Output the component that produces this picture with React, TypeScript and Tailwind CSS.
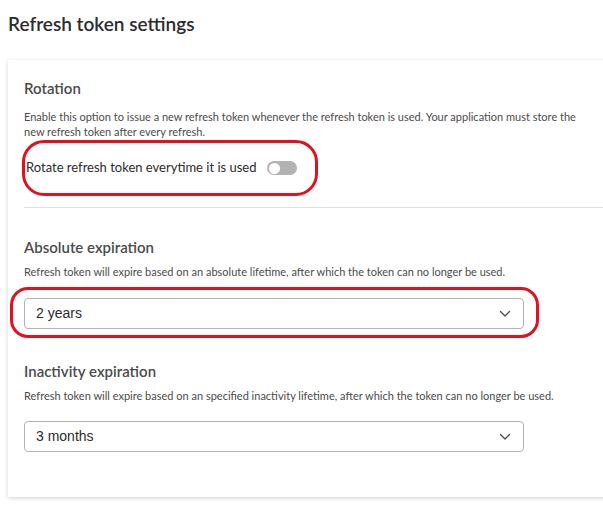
import React from "react";

const Chevron = () => (
  <svg width="12" height="8" viewBox="0 0 12 8" fill="none" className="text-[#4b4b4b]">
    <path d="M1.5 1.5L6 6L10.5 1.5" stroke="currentColor" strokeWidth="1.3" strokeLinecap="round" strokeLinejoin="round" />
  </svg>
);

const SelectBox = ({ value }: { value: string }) => (
  <div className="flex h-[31px] w-[500px] items-center justify-between rounded-[4px] border border-[#b3b3b3] bg-white pl-[11px] pr-[12px]">
    <span className="font-['Liberation_Sans',sans-serif] text-[14px] text-[#2c2c2c]">{value}</span>
    <Chevron />
  </div>
);

const App = () => {
  return (
    <div className="min-h-[505px] w-[603px] overflow-hidden bg-white font-['Lato',sans-serif] text-[#4b4b4b]">
      <h1 className="pl-[8px] pt-[9px] text-[19px] font-semibold leading-[30px] text-[#2c2c2c]">
        Refresh token settings
      </h1>

      <div className="ml-[8px] mt-[21px] w-[620px] bg-white pb-[45px] shadow-[0_1px_4px_rgba(0,0,0,0.18)]">
        <div className="pl-[16px] pr-[30px]">
          <h2 className="pt-[18px] text-[15px] font-semibold leading-[20px] text-[#4b4b4b]">Rotation</h2>
          <p className="mt-[11px] w-[570px] text-[11px] leading-[15px]">
            Enable this option to issue a new refresh token whenever the refresh token is used. Your application must
            store the new refresh token after every refresh.
          </p>

          <div className="relative mt-[1px] flex h-[56px] w-[296px] items-center">
            <div className="absolute -left-[2px] top-0 h-[56px] w-[296px] rounded-[22px] border-[3px] border-[#e0121f]" />
            <span className="ml-[2px] text-[13px] text-[#2c2c2c]">Rotate refresh token everytime it is used</span>
            <span className="ml-[10px] flex h-[14px] w-[30px] items-center rounded-full bg-[#b3b3b3] px-[2px]">
              <span className="h-[11px] w-[11px] rounded-full bg-white" />
            </span>
          </div>
        </div>

        <div className="ml-[16px] mt-[11px] h-px bg-[#e1e1e1]" />

        <div className="pl-[16px]">
          <h2 className="mt-[29px] text-[15px] font-semibold leading-[20px] text-[#4b4b4b]">Absolute expiration</h2>
          <p className="mt-[7px] text-[11px] leading-[15px]">
            Refresh token will expire based on an absolute lifetime, after which the token can no longer be used.
          </p>
          <div className="relative mt-[8px] w-[500px] pb-[9px] pt-[11px]">
            <div className="absolute -left-[14px] -right-[15px] top-0 bottom-0 rounded-[18px] border-[3px] border-[#e0121f]" />
            <SelectBox value="2 years" />
          </div>

          <h2 className="mt-[23px] text-[15px] font-semibold leading-[20px] text-[#4b4b4b]">Inactivity expiration</h2>
          <p className="mt-[7px] text-[11px] leading-[15px]">
            Refresh token will expire based on an specified inactivity lifetime, after which the token can no longer be
            used.
          </p>
          <div className="mt-[18px]">
            <SelectBox value="3 months" />
          </div>
        </div>
      </div>
    </div>
  );
};

export default App;
